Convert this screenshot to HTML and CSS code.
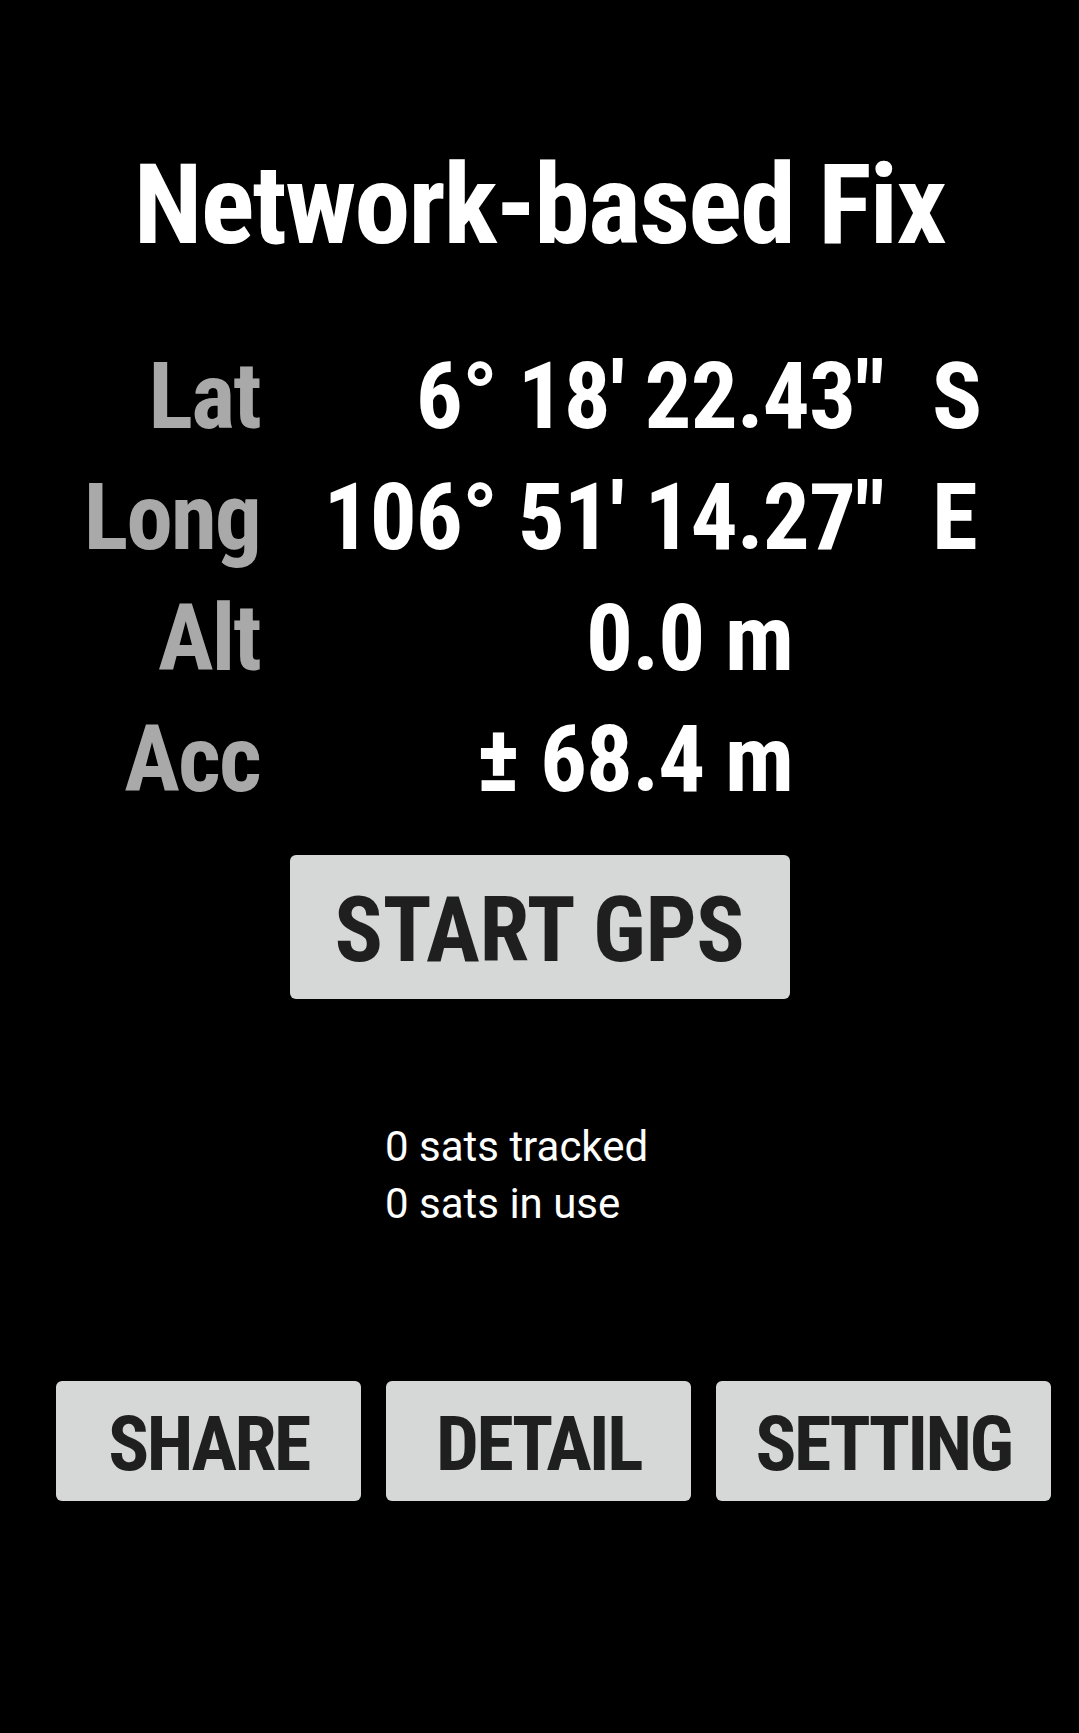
FILE: index.html
```html
<!DOCTYPE html>
<html lang="en">
<head>
    <meta charset="UTF-8">
    <meta name="viewport" content="width=device-width, initial-scale=1.0">
    <title>Network-based Fix</title>
    <link rel="stylesheet" href="styles.css">
</head>
<body>
    <main class="screen">
        <h1 class="fix-title">Network-based Fix</h1>

        <div class="coords">
            <span class="label">Lat</span>
            <span class="value">6° 18' 22.43"</span>
            <span class="hemi">S</span>

            <span class="label">Long</span>
            <span class="value">106° 51' 14.27"</span>
            <span class="hemi">E</span>

            <span class="label">Alt</span>
            <span class="value value-short">0.0 m</span>
            <span class="hemi"></span>

            <span class="label">Acc</span>
            <span class="value value-short">± 68.4 m</span>
            <span class="hemi"></span>
        </div>

        <button class="btn btn-start" type="button">START GPS</button>

        <div class="sats">
            <div>0 sats tracked</div>
            <div>0 sats in use</div>
        </div>

        <div class="actions">
            <button class="btn" type="button">SHARE</button>
            <button class="btn" type="button">DETAIL</button>
            <button class="btn" type="button">SETTING</button>
        </div>
    </main>
</body>
</html>
```

FILE: styles.css
```css
body {
    margin: 0;
    background-color: #000;
    color: #fff;
    font-family: Roboto, 'Noto Sans', sans-serif;
}
.screen {
    display: flex;
    flex-direction: column;
    padding-top: 139px;
    min-height: 1733px;
    box-sizing: border-box;
}
.fix-title,
.coords,
.btn {
    font-family: 'Roboto Condensed', Roboto, sans-serif;
    font-weight: 700;
    font-stretch: 75%;
}
.fix-title {
    margin: 0;
    font-size: 112px;
    line-height: 131px;
    letter-spacing: -1.7px;
    text-align: center;
    color: #fff;
}
.coords {
    display: grid;
    grid-template-columns: 262px 622px 147px;
    margin-top: 66px;
    font-size: 93px;
    line-height: 121px;
}
.label {
    text-align: right;
    color: #a9a9a9;
    letter-spacing: -1.8px;
    margin-right: 2px;
}
.value {
    text-align: right;
    color: #fff;
    white-space: nowrap;
    letter-spacing: -0.9px;
}
.value-short {
    padding-right: 91px;
}
.hemi {
    padding-left: 48px;
    color: #fff;
}
.btn {
    background-color: #d6d7d7;
    color: #1f1f1f;
    border: none;
    border-radius: 6px;
    padding: 0;
    margin: 0;
}
.btn-start {
    align-self: center;
    width: 500px;
    height: 144px;
    margin-top: 35px;
    padding-top: 7px;
    font-size: 90px;
    letter-spacing: -0.3px;
}
.sats {
    margin: 119px 0 0 385px;
    font-size: 42px;
    line-height: 57px;
}
.actions {
    display: grid;
    grid-template-columns: 305px 305px 335px;
    gap: 25px;
    margin: 149px 0 0 56px;
}
.actions .btn {
    height: 120px;
    padding-top: 6px;
    font-size: 76px;
    letter-spacing: -2.5px;
}
```
